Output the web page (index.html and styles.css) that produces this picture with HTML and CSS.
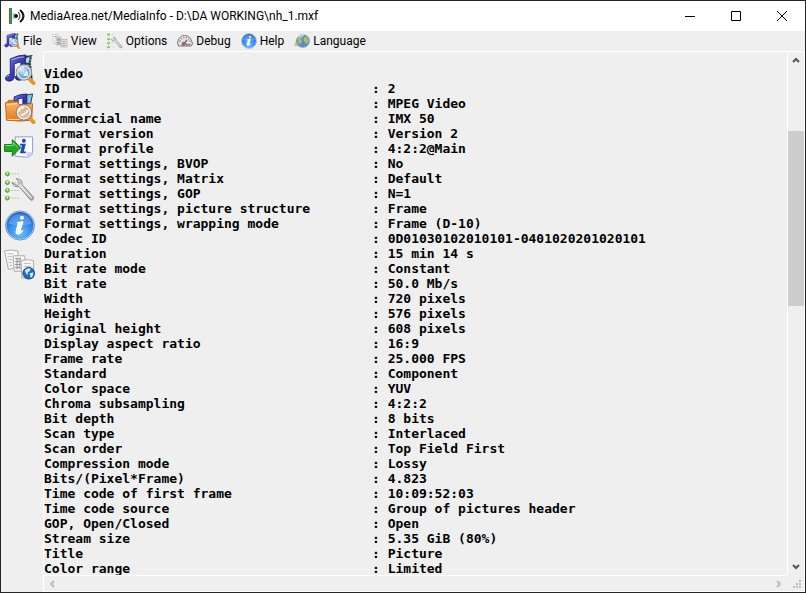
FILE: index.html
```html
<!DOCTYPE html>
<html lang="en">
<head>
  <meta charset="UTF-8" />
  <meta name="viewport" content="width=device-width, initial-scale=1.0" />
  <title>MediaArea.net/MediaInfo - D:\DA WORKING\nh_1.mxf</title>
  <link rel="stylesheet" href="styles.css">
</head>
<body>
  <!-- Shared icons, used by both the menu bar and the toolbar -->
  <svg class="sprite" aria-hidden="true">
    <defs>
      <linearGradient id="note-blue" x1="0" y1="0" x2="1" y2="1">
        <stop offset="0" stop-color="#8585e8" />
        <stop offset="0.5" stop-color="#3e3eb4" />
        <stop offset="1" stop-color="#191970" />
      </linearGradient>
      <radialGradient id="lens" cx="0.4" cy="0.35" r="0.7">
        <stop offset="0" stop-color="#d8f0fc" />
        <stop offset="0.6" stop-color="#79aed8" />
        <stop offset="1" stop-color="#4c7fb6" />
      </radialGradient>
      <linearGradient id="folder" x1="0" y1="0" x2="0" y2="1">
        <stop offset="0" stop-color="#ffb568" />
        <stop offset="1" stop-color="#e07a1c" />
      </linearGradient>
      <radialGradient id="info-blue" cx="0.5" cy="0.8" r="0.8">
        <stop offset="0" stop-color="#6cc0ff" />
        <stop offset="0.6" stop-color="#2f86ea" />
        <stop offset="1" stop-color="#1c60c8" />
      </radialGradient>
      <linearGradient id="steel" x1="0" y1="0" x2="1" y2="1">
        <stop offset="0" stop-color="#f6f6f6" />
        <stop offset="1" stop-color="#a9a9a9" />
      </linearGradient>
      <symbol id="film-note" viewBox="0 0 32 32">
        <path d="M21 2l8-1c-2 5-2 9-1 14l1 11-9 1z" fill="#2b3845" />
        <path d="M22 4l4-1-1 6h-3zM22 11h3l1 6h-4zM22 19h4l1 5h-5z" fill="#a9dcf5" />
        <path d="M27 3l1 0M26 6h1M26 9h1M26 12h1M27 15h1M27 18h1M27 21h1" stroke="#fff" stroke-width="1" />
        <path d="M6 5q8-4 16-4v4l-1 1v16q0 4-5 5-5 0-5-3 1-3 6-4V8L10 10v14q-1 4-5 4-4 0-4-3 0-3 5-4z" fill="url(#note-blue)" stroke="#222276" stroke-width="1" />
        <path d="M7 6q7-3 13-3M2 24q1-2 3-2" fill="none" stroke="#b0b0f8" stroke-width="1" />
        <path d="M26 26l4 4" stroke="#e8962c" stroke-width="4" stroke-linecap="round" />
        <circle cx="20" cy="19" r="7" fill="url(#lens)" stroke="#e2e2e2" stroke-width="2" />
        <circle cx="20" cy="19" r="8" fill="none" stroke="#7f8992" stroke-width="1" />
        <path d="M15 18q1-4 5-4M20 22l3-4 1 4z" fill="#b5d9f3" stroke="#fff" stroke-width="1" />
      </symbol>
      <symbol id="folder-media" viewBox="0 0 32 32">
        <path d="M2 10l2-3h7l2 3z" fill="#d57b26" />
        <path d="M23 2l6-1-2 10h-6z" fill="#7fc7e9" stroke="#253748" stroke-width="1" />
        <path d="M10 14V4q6-3 13-3v12h-4V5l-5 1v8z" fill="url(#note-blue)" stroke="#202070" />
        <path d="M1 10l12-1 2 3 14-1-1 17q-12 2-26 0z" fill="url(#folder)" stroke="#c2661b" />
        <path d="M2 12l11-1M3 27q9 1 13 0" stroke="#ffdca5" fill="none" />
        <path d="M26 26l4 4" stroke="#e8962c" stroke-width="4" stroke-linecap="round" />
        <circle cx="20" cy="20" r="7" fill="#d9b99a" stroke="#ececec" stroke-width="2" />
        <circle cx="20" cy="20" r="8" fill="none" stroke="#7e776f" />
        <path d="M15 19q1-4 5-4M17 23q5-1 7-5" fill="none" stroke="#fff2db" stroke-width="2" />
      </symbol>
      <symbol id="export-info" viewBox="0 0 32 32">
        <path d="M11 5h18v16q-1 5-7 5l-11-1z" fill="#f8faff" stroke="#8f9cc8" />
        <path d="M29 20q-2 1-6 1 1 3-1 5 6 0 7-6z" fill="#cbd3f3" />
        <g fill="#2446b8">
          <circle cx="20" cy="9" r="2" />
          <path d="M16 12h6l-2 8h2v2h-6l2-8h-2z" />
        </g>
        <path d="M0 13h8V8l9 8-9 9v-5H0z" fill="#28a428" stroke="#137813" />
        <path d="M1 14h8v-3l5 5" fill="none" stroke="#8fe57a" />
      </symbol>
      <symbol id="list-wrench" viewBox="0 0 32 32">
        <g stroke="#bcbcbc" stroke-dasharray="2 1">
          <path d="M7 3h8M7 12h8M7 20h8M7 28h8" />
        </g>
        <g fill="#83cc4c" stroke="#4f9d29">
          <circle cx="3" cy="3" r="2" />
          <circle cx="3" cy="12" r="2" />
          <circle cx="3" cy="20" r="2" />
          <circle cx="3" cy="28" r="2" />
        </g>
        <g fill="#e3ffc9">
          <circle cx="3" cy="2" r="1" />
          <circle cx="3" cy="11" r="1" />
          <circle cx="3" cy="19" r="1" />
          <circle cx="3" cy="27" r="1" />
        </g>
        <path d="M8 12q1 5 7 4l12 14q3 1 3-3L18 14q1-6-6-6l4 4-3 3z" fill="url(#steel)" stroke="#858585" />
        <path d="M16 15l12 13" stroke="#fff" />
      </symbol>
      <symbol id="info-ball" viewBox="0 0 32 32">
        <circle cx="16" cy="16" r="15" fill="#e4ebf3" stroke="#6f8fb8" />
        <circle cx="16" cy="16" r="14" fill="url(#info-blue)" />
        <path d="M4 14q2-10 12-10t12 10q-12 4-24 0z" fill="#fff" opacity="0.2" />
        <circle cx="18" cy="8" r="2" fill="#fff" />
        <path d="M13 13l6-1-3 10q0 1 3-1-2 4-5 4-3 0-2-3l2-8z" fill="#fff" stroke="#fff" />
      </symbol>
      <symbol id="sheets-globe" viewBox="0 0 32 32">
        <g fill="#f6f6f6" stroke="#aaa">
          <path d="M0 2q5-2 14 0v17l-10 2z" />
          <path d="M9 7h12v16H10z" />
          <path d="M17 12q7-2 13 0v18H18z" />
        </g>
        <path d="M3 5h6M3 8h5M4 11h4M4 14h4M5 17h3M20 15h7M20 18h7M20 21h5M20 24h3" stroke="#bbb" />
        <path d="M11 10h6M11 13h5M11 16h5M11 19h5M13 9v12M16 9v12" stroke="#919191" />
        <circle cx="25" cy="25" r="6" fill="#2469b5" stroke="#174a87" />
        <path d="M21 22q3-3 6-2l-1 3-2 1v3l-2-2zM26 25l4-1-1 4-2 2z" fill="#c5edff" />
      </symbol>
      <symbol id="sheets" viewBox="0 0 32 32">
        <path d="M1 3h11v18H3z" fill="#f4f4f4" stroke="#b5b5b5" />
        <path d="M8 8h10v16H8zM18 13h12v15H18z" fill="#e4e4e4" stroke="#9a9a9a" />
        <path d="M11 11h4v4h-4zM11 18h4v4h-4zM21 17h6M21 21h6M21 25h6M4 7h5" fill="#a2aaae" stroke="#a2aaae" stroke-width="2" />
      </symbol>
      <symbol id="gauge" viewBox="0 0 32 32">
        <path d="M1 18Q6 4 15 5q13 0 16 17l-3 4H3z" fill="#e6e6e6" stroke="#777" stroke-width="2" />
        <path d="M6 17q4-8 10-8t10 8" fill="none" stroke="#777" stroke-width="3" stroke-dasharray="2 3" />
        <path d="M12 18l8 6M12 24l8-10" stroke="#b8504c" stroke-width="3" />
        <circle cx="13" cy="22" r="4" fill="#777" />
        <path d="M20 23h7" stroke="#888" stroke-width="3" />
      </symbol>
      <symbol id="globe" viewBox="0 0 32 32">
        <path d="M0 26l4-13 14 1-2 13z" fill="#cbc98e" />
        <circle cx="18" cy="16" r="13" fill="#5d8fc0" stroke="#7294ad" />
        <path d="M7 12q5-8 12-8l-2 6-4 2 3 4-3 6-4-1zM20 9l6-2 4 9-4 6-4-3-3-5z" fill="#a7bc78" />
        <path d="M9 8q5-5 12-4" fill="none" stroke="#edf6fb" stroke-width="2" />
      </symbol>
    </defs>
  </svg>

  <div class="window">
    <header class="titlebar">
      <svg class="app-icon" viewBox="0 0 16 16" aria-hidden="true">
        <path d="M0 0h1v16H0z" fill="#d33c38" />
        <path d="M1 0h2v16H1z" fill="#169c55" />
        <circle cx="7" cy="8" r="2" fill="#111" />
        <path d="M9 4q4 4 0 8" fill="none" stroke="#333" />
        <path d="M11 2q7 6 0 12" fill="none" stroke="#111" stroke-width="2" />
        <path d="M5 5q-2 3 0 6" fill="none" stroke="#999" />
      </svg>
      <h1 class="title">MediaArea.net/MediaInfo - D:\DA WORKING\nh_1.mxf</h1>
      <div class="window-controls">
        <button type="button" aria-label="Minimize"><svg viewBox="0 0 10 10"><path d="M0 5.500h10" /></svg></button>
        <button type="button" aria-label="Maximize"><svg viewBox="0 0 10 10"><path d="M.5.5h9v9h-9z" /></svg></button>
        <button type="button" aria-label="Close"><svg viewBox="0 0 10 10"><path d="M0 0l10 10M10 0L0 10" /></svg></button>
      </div>
    </header>

    <nav class="menubar">
      <button type="button"><svg><use href="#film-note" /></svg>File</button>
      <button type="button"><svg><use href="#sheets" /></svg>View</button>
      <button type="button"><svg><use href="#list-wrench" /></svg>Options</button>
      <button type="button"><svg><use href="#gauge" /></svg>Debug</button>
      <button type="button"><svg><use href="#info-ball" /></svg>Help</button>
      <button type="button"><svg><use href="#globe" /></svg>Language</button>
    </nav>

    <div class="workspace">
      <aside class="toolbar">
        <button type="button" aria-label="Open file"><svg><use href="#film-note" /></svg></button>
        <button type="button" aria-label="Open folder"><svg><use href="#folder-media" /></svg></button>
        <button type="button" aria-label="Export"><svg><use href="#export-info" /></svg></button>
        <button type="button" aria-label="Options"><svg><use href="#list-wrench" /></svg></button>
        <button type="button" aria-label="About"><svg><use href="#info-ball" /></svg></button>
        <button type="button" aria-label="View"><svg><use href="#sheets-globe" /></svg></button>
      </aside>

      <main class="report">
        <table>
          <caption>Video</caption>
          <tbody>
            <tr><th scope="row">ID</th><td>: 2</td></tr>
            <tr><th scope="row">Format</th><td>: MPEG Video</td></tr>
            <tr><th scope="row">Commercial name</th><td>: IMX 50</td></tr>
            <tr><th scope="row">Format version</th><td>: Version 2</td></tr>
            <tr><th scope="row">Format profile</th><td>: 4:2:2@Main</td></tr>
            <tr><th scope="row">Format settings, BVOP</th><td>: No</td></tr>
            <tr><th scope="row">Format settings, Matrix</th><td>: Default</td></tr>
            <tr><th scope="row">Format settings, GOP</th><td>: N=1</td></tr>
            <tr><th scope="row">Format settings, picture structure</th><td>: Frame</td></tr>
            <tr><th scope="row">Format settings, wrapping mode</th><td>: Frame (D-10)</td></tr>
            <tr><th scope="row">Codec ID</th><td>: 0D01030102010101-0401020201020101</td></tr>
            <tr><th scope="row">Duration</th><td>: 15 min 14 s</td></tr>
            <tr><th scope="row">Bit rate mode</th><td>: Constant</td></tr>
            <tr><th scope="row">Bit rate</th><td>: 50.0 Mb/s</td></tr>
            <tr><th scope="row">Width</th><td>: 720 pixels</td></tr>
            <tr><th scope="row">Height</th><td>: 576 pixels</td></tr>
            <tr><th scope="row">Original height</th><td>: 608 pixels</td></tr>
            <tr><th scope="row">Display aspect ratio</th><td>: 16:9</td></tr>
            <tr><th scope="row">Frame rate</th><td>: 25.000 FPS</td></tr>
            <tr><th scope="row">Standard</th><td>: Component</td></tr>
            <tr><th scope="row">Color space</th><td>: YUV</td></tr>
            <tr><th scope="row">Chroma subsampling</th><td>: 4:2:2</td></tr>
            <tr><th scope="row">Bit depth</th><td>: 8 bits</td></tr>
            <tr><th scope="row">Scan type</th><td>: Interlaced</td></tr>
            <tr><th scope="row">Scan order</th><td>: Top Field First</td></tr>
            <tr><th scope="row">Compression mode</th><td>: Lossy</td></tr>
            <tr><th scope="row">Bits/(Pixel*Frame)</th><td>: 4.823</td></tr>
            <tr><th scope="row">Time code of first frame</th><td>: 10:09:52:03</td></tr>
            <tr><th scope="row">Time code source</th><td>: Group of pictures header</td></tr>
            <tr><th scope="row">GOP, Open/Closed</th><td>: Open</td></tr>
            <tr><th scope="row">Stream size</th><td>: 5.35 GiB (80%)</td></tr>
            <tr><th scope="row">Title</th><td>: Picture</td></tr>
            <tr><th scope="row">Color range</th><td>: Limited</td></tr>
          </tbody>
        </table>
      </main>

      <div class="scroll-y">
        <button type="button" aria-label="Scroll up"><svg viewBox="0 0 8 8"><path d="M1 6l3-3 3 3" /></svg></button>
        <div class="track"><div class="thumb"></div></div>
        <button type="button" aria-label="Scroll down"><svg viewBox="0 0 8 8"><path d="M1 2l3 3 3-3" /></svg></button>
      </div>

      <div class="scroll-x">
        <button type="button" aria-label="Scroll left"><svg viewBox="0 0 8 8"><path d="M6 1L3 4l3 3" /></svg></button>
        <button type="button" aria-label="Scroll right"><svg viewBox="0 0 8 8"><path d="M2 1l3 3-3 3" /></svg></button>
      </div>

      <div class="grip">
        <svg viewBox="0 0 8 8"><path d="M6 0h2v2H6zM3 3h2v2H3zM6 3h2v2H6zM0 6h2v2H0zM3 6h2v2H3zM6 6h2v2H6z" /></svg>
      </div>
    </div>
  </div>
</body>
</html>
```
FILE: styles.css
```css
* {
  margin: 0;
  padding: 0;
  box-sizing: border-box;
}

body {
  font-family: Roboto, 'Open Sans', sans-serif;
  font-size: 12px;
  color: #000;
  background: #efefef;
}

button {
  border: 0;
  background: transparent;
  font: inherit;
  color: inherit;
}

svg {
  display: block;
}

.sprite {
  position: absolute;
  width: 0;
  height: 0;
}

.window {
  display: flex;
  flex-direction: column;
  height: 100vh;
  border: 1px solid #262427;
  background: #efefef;
  overflow: hidden;
}

/* Title bar */
.titlebar {
  display: flex;
  align-items: center;
  flex: none;
  height: 30px;
  padding-left: 8px;
  background: #fff;
}

.app-icon {
  width: 16px;
  height: 16px;
  margin-right: 5px;
}

.title {
  flex: 1;
  font-size: 12px;
  font-weight: normal;
  white-space: nowrap;
}

.window-controls {
  display: flex;
  height: 100%;
}

.window-controls button {
  display: flex;
  align-items: center;
  justify-content: center;
  width: 46px;
}

.window-controls svg {
  width: 10px;
  height: 10px;
  overflow: visible;
  fill: none;
  stroke: #000;
}

/* Menu bar */
.menubar {
  display: flex;
  gap: 10px;
  flex: none;
  height: 20px;
  padding: 2px 3px;
}

.menubar button {
  display: flex;
  align-items: center;
  gap: 3px;
  height: 16px;
  line-height: 16px;
}

.menubar svg {
  width: 16px;
  height: 16px;
}

/* Toolbar, report and scrollbars */
.workspace {
  display: grid;
  grid-template-columns: 42px 1fr 18px;
  grid-template-rows: 1fr 17px;
  flex: 1;
  min-height: 0;
}

.toolbar {
  display: flex;
  flex-direction: column;
  grid-row: 1 / 3;
  gap: 8px;
  padding: 3px;
}

.toolbar button,
.toolbar svg {
  width: 32px;
  height: 31px;
}

.report {
  min-height: 0;
  padding-top: 14px;
  border-top: 1px solid #fff;
  border-left: 1px solid #fff;
  overflow: hidden;
  font-family: 'DejaVu Sans Mono', monospace;
  font-size: 13px;
  line-height: 15px;
  font-weight: bold;
}

.report table {
  border-collapse: collapse;
  white-space: nowrap;
}

.report caption,
.report th {
  text-align: left;
}

.report th {
  width: 328px;
}

.scroll-y {
  display: flex;
  flex-direction: column;
  border: 1px solid #fff;
  border-bottom: 0;
}

.scroll-y button,
.scroll-x button {
  display: flex;
  align-items: center;
  justify-content: center;
  flex: none;
  width: 16px;
  height: 16px;
}

.scroll-y svg,
.scroll-x svg {
  width: 8px;
  height: 8px;
  fill: none;
  stroke: #555;
  stroke-width: 2;
}

.track {
  flex: 1;
  padding-top: 63px;
}

.thumb {
  height: 41%;
  background: #cdcdcd;
}

.scroll-x {
  display: flex;
  justify-content: space-between;
  border: 1px solid #fff;
  border-right: 0;
}

.scroll-x svg {
  stroke: #bdbdbd;
}

.grip {
  display: flex;
  align-items: flex-end;
  justify-content: flex-end;
  padding: 3px;
  border-right: 1px solid #fff;
  border-bottom: 1px solid #fff;
}

.grip svg {
  width: 8px;
  height: 8px;
  fill: #bdbdbd;
}
```
